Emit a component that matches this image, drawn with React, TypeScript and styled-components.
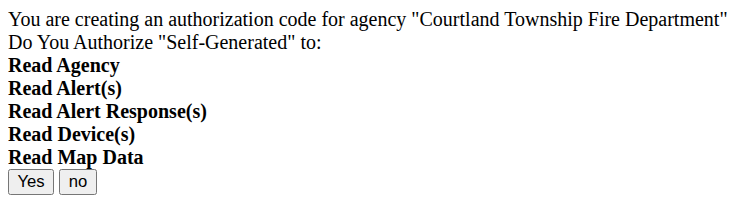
import styled, { createGlobalStyle } from "styled-components";

const GlobalStyle = createGlobalStyle`
  body {
    margin: 8px;
    font-family: "Liberation Serif", "Times New Roman", serif;
    font-size: 20px;
    color: #000;
    background: #fff;
  }
`;

const Page = styled.div`
  display: flex;
  flex-direction: column;
`;

const Line = styled.div<{ $bold?: boolean }>`
  font-weight: ${(p) => (p.$bold ? 700 : 400)};
`;

const Actions = styled.div`
  display: flex;
  gap: 5px;
`;

const Button = styled.button`
  font-family: "Liberation Sans", Arial, sans-serif;
  font-size: 16.67px;
  padding: 2px 8.5px;
  background: #efefef;
  border: 1.25px solid #767676;
  border-radius: 2.5px;
  color: #000;
`;

const scopes = [
  "Read Agency",
  "Read Alert(s)",
  "Read Alert Response(s)",
  "Read Device(s)",
  "Read Map Data",
];

const App = () => (
  <>
    <GlobalStyle />
    <Page>
      <Line>
        You are creating an authorization code for agency "Courtland Township
        Fire Department"
      </Line>
      <Line>Do You Authorize "Self-Generated" to:</Line>
      {scopes.map((s) => (
        <Line key={s} $bold>
          {s}
        </Line>
      ))}
      <Actions>
        <Button>Yes</Button>
        <Button>no</Button>
      </Actions>
    </Page>
  </>
);

export default App;
